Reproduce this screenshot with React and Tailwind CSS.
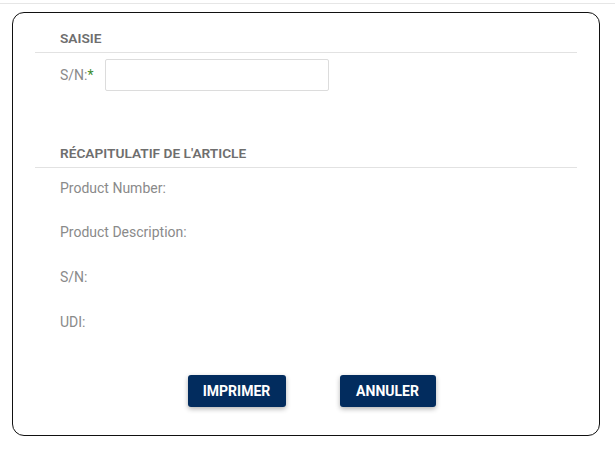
import React, { useState } from "react";

const ResumeRow = ({ label, value }) => {
  return (
    <div className="flex h-5 items-center pl-[25px] text-[14px] text-[#8a8a8a]">
      <span>{label}</span>
      {value && <span className="ml-2 text-[#444]">{value}</span>}
    </div>
  );
};

const App = () => {
  const [serial, setSerial] = useState("");

  const summary = [
    { label: "Product Number:", value: "" },
    { label: "Product Description:", value: "" },
    { label: "S/N:", value: "" },
    { label: "UDI:", value: "" },
  ];

  return (
    <div
      className="min-h-screen bg-white pt-[3px]"
      style={{ fontFamily: "Roboto, 'Liberation Sans', sans-serif" }}
    >
      <div className="border-t border-[#e6e6e6] pl-3 pr-[15px] pt-2">
        <div className="h-[424px] rounded-xl border border-[#111] px-[22px]">
          {/* Saisie */}
          <div className="border-b border-[#e2e2e2] pb-[6px] pl-[25px] pt-[17px]">
            <h2 className="h-4 text-[13.7px] font-semibold uppercase leading-4 text-[#6e6e6e]">
              Saisie
            </h2>
          </div>
          <div className="mt-[6px] flex items-center pl-[25px]">
            <label className="w-[45px] text-[14px] text-[#8a8a8a]">
              S/N:<span className="text-[#3c8d2f]">*</span>
            </label>
            <input
              type="text"
              value={serial}
              onChange={(e) => setSerial(e.target.value)}
              className="h-[32px] w-[224px] rounded-[2px] border border-[#dcdcdc] px-2 text-[13px] outline-none"
            />
          </div>

          {/* Recapitulatif */}
          <div className="mt-[54px] border-b border-[#e2e2e2] pb-[6px] pl-[25px]">
            <h2 className="h-4 text-[13.7px] font-semibold uppercase leading-4 text-[#6e6e6e]">
              Récapitulatif de l'article
            </h2>
          </div>
          <div className="mt-[10px] flex flex-col gap-[24.7px]">
            {summary.map((row, index) => (
              <ResumeRow key={index} label={row.label} value={row.value} />
            ))}
          </div>

          <div className="mt-[43px] flex justify-center gap-[54px] pl-[11px]">
            <button className="h-8 w-[98px] rounded-[3px] bg-[#022c5e] text-[14px] font-bold text-white shadow-[0_2px_5px_rgba(0,0,0,0.3)]">
              IMPRIMER
            </button>
            <button className="h-8 w-[96px] rounded-[3px] bg-[#022c5e] text-[14px] font-bold text-white shadow-[0_2px_5px_rgba(0,0,0,0.3)]">
              ANNULER
            </button>
          </div>
        </div>
      </div>
    </div>
  );
};

export default App;
